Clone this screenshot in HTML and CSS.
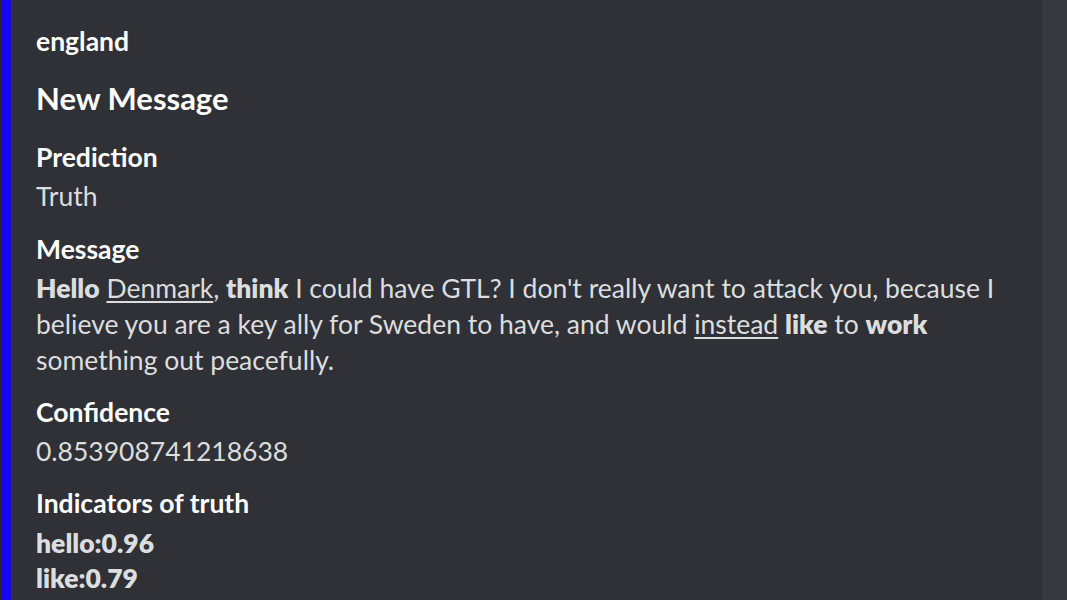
FILE: index.html
```html
<!DOCTYPE html>
<html>
<head>
<meta charset="utf-8">
<link rel="stylesheet" href="styles.css">
</head>
<body>
<div class="page">
  <div class="embed">
    <div class="author">england</div>
    <div class="title">New Message</div>
    <div class="field field-first">
      <div class="name">Prediction</div>
      <div class="value">Truth</div>
    </div>
    <div class="field field-msg">
      <div class="name">Message</div>
      <div class="value desc"><b>Hello</b> <u>Denmark</u>, <b>think</b> I could have GTL? I don't really want to attack you, because I believe you are a key ally for Sweden to have, and would <u>instead</u> <b>like</b> to <b>work</b> something out peacefully.</div>
    </div>
    <div class="field">
      <div class="name">Confidence</div>
      <div class="value conf">0.853908741218638</div>
    </div>
    <div class="field">
      <div class="name">Indicators of truth</div>
      <div class="value list"><b>hello:0.96</b><br><b>like:0.79</b></div>
    </div>
  </div>
</div>
</body>
</html>
```
FILE: styles.css
```css
html, body {
  margin: 0;
  padding: 0;
  background: #36393f;
  height: 100%;
  overflow: hidden;
}
.page {
  padding-left: 2px;
  background: #26272b;
  width: 1040px;
  height: 600px;
  display: flex;
}
.embed {
  flex: 1;
  background: #2f3136;
  border-left: 9px solid #1607ee;
  padding: 23px 40px 0 25px;
  font-family: Lato, "Open Sans", sans-serif;
  color: #dcddde;
}
.author {
  font-size: 26.5px;
  font-weight: 700;
  color: #ffffff;
  line-height: 36px;
}
.title {
  font-size: 31px;
  font-weight: 700;
  color: #ffffff;
  line-height: 40px;
  margin-top: 19px;
}
.field {
  margin-top: 16px;
}
.field-first {
  margin-top: 21px;
}
.field-msg {
  margin-top: 17px;
}
.name {
  font-size: 26.5px;
  font-weight: 700;
  color: #ffffff;
  line-height: 36px;
  margin-bottom: 3px;
}
.value {
  font-size: 26.5px;
  line-height: 36px;
}
.desc {
  margin-top: 1px;
}
.conf {
  margin-top: 3px;
}
.value b {
  font-weight: 800;
}
.value u {
  text-decoration-thickness: 2px;
  text-underline-offset: 3px;
}
.list {
  margin-top: 5px;
  line-height: 35px;
}
```
